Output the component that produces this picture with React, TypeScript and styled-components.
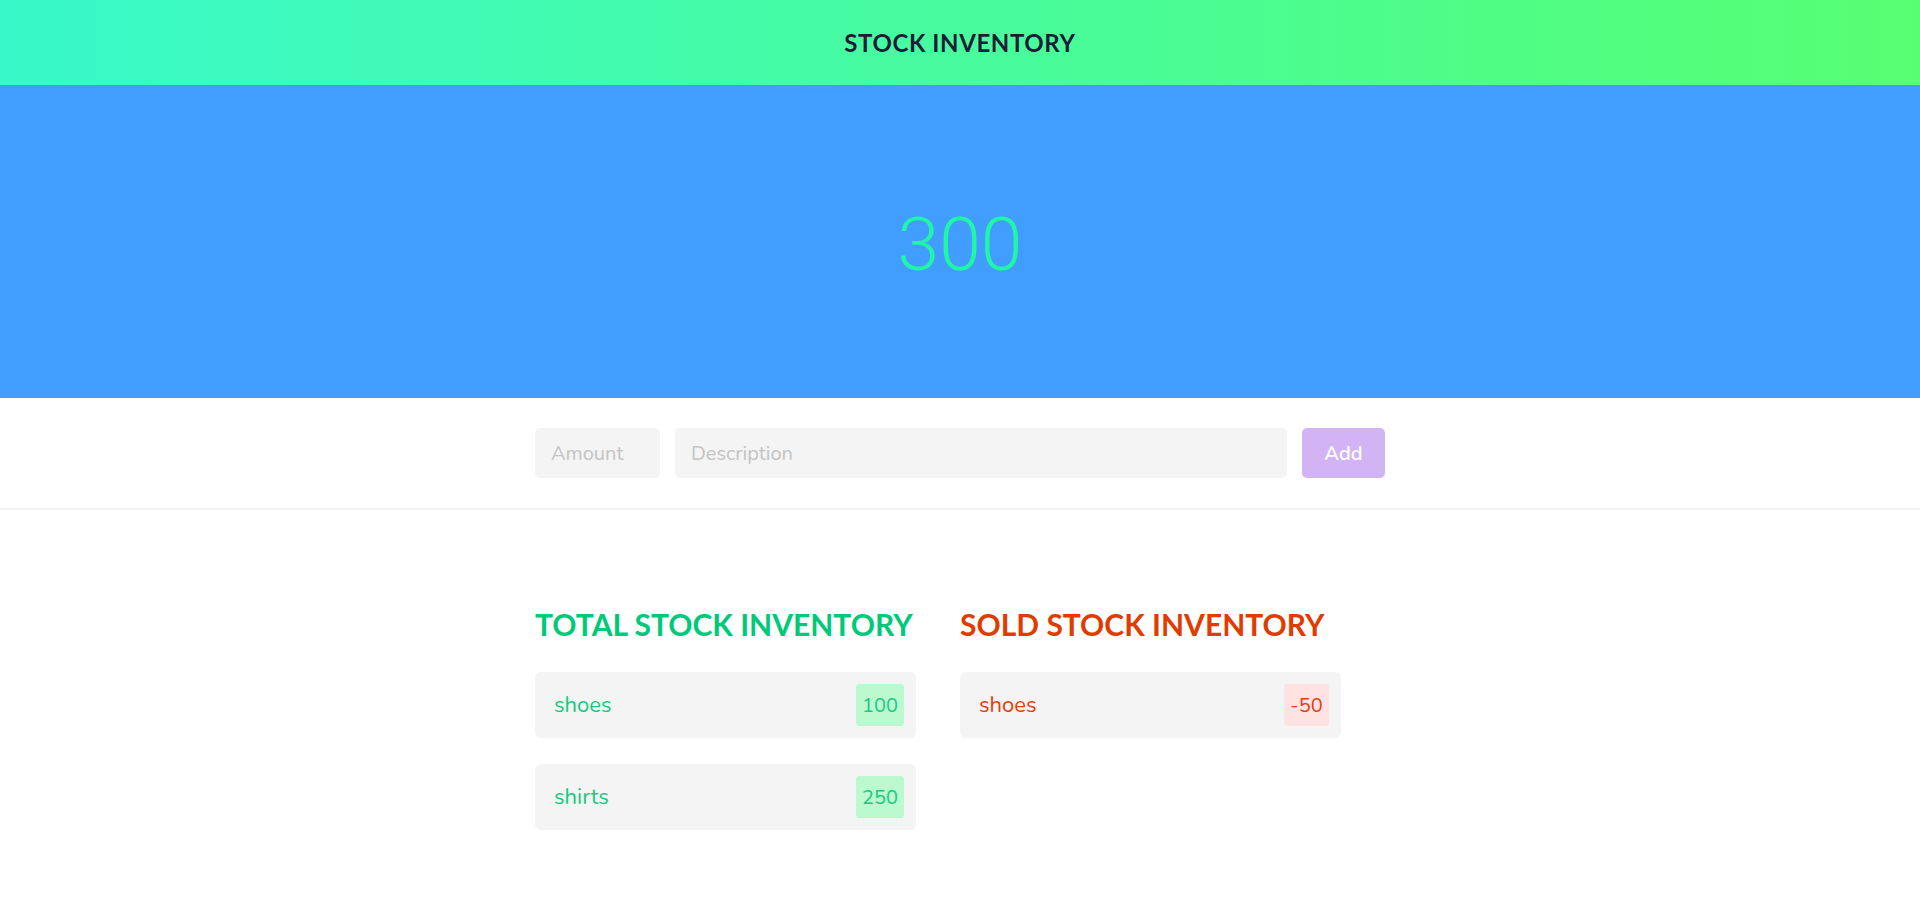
import styled, { createGlobalStyle } from 'styled-components';

const GlobalStyle = createGlobalStyle`
  * {
    box-sizing: border-box;
  }
  body {
    margin: 0;
    background: #ffffff;
    font-family: 'Nunito', 'Lato', 'Noto Sans', sans-serif;
  }
`;

type Tone = 'income' | 'expense';

const tones = {
  income: { text: '#17c97f', badge: '#bbf9cf', heading: '#00c97a' },
  expense: { text: '#e03f0c', badge: '#ffe3e3', heading: '#e03c00' },
};

const totalItems = [
  { id: 1, label: 'shoes', amount: '100' },
  { id: 2, label: 'shirts', amount: '250' },
];

const soldItems = [{ id: 3, label: 'shoes', amount: '-50' }];

const App = () => {
  return (
    <>
      <GlobalStyle />
      <Header>
        <HeaderTitle>STOCK INVENTORY</HeaderTitle>
      </Header>

      <Balance>
        <BalanceValue>300</BalanceValue>
      </Balance>

      <FormSection>
        <Form onSubmit={(e) => e.preventDefault()}>
          <AmountInput type='text' placeholder='Amount' />
          <DescInput type='text' placeholder='Description' />
          <AddButton type='submit'>Add</AddButton>
        </Form>
      </FormSection>

      <Lists>
        <Column>
          <ListTitle $tone='income'>TOTAL STOCK INVENTORY</ListTitle>
          <ItemList>
            {totalItems.map((item) => (
              <Item key={item.id} $tone='income'>
                <span>{item.label}</span>
                <Badge $tone='income'>{item.amount}</Badge>
              </Item>
            ))}
          </ItemList>
        </Column>
        <Column>
          <ListTitle $tone='expense'>SOLD STOCK INVENTORY</ListTitle>
          <ItemList>
            {soldItems.map((item) => (
              <Item key={item.id} $tone='expense'>
                <span>{item.label}</span>
                <Badge $tone='expense'>{item.amount}</Badge>
              </Item>
            ))}
          </ItemList>
        </Column>
      </Lists>
    </>
  );
};

const Header = styled.header`
  height: 85px;
  display: flex;
  align-items: center;
  justify-content: center;
  background: linear-gradient(to right, #38f8c9, #56ff72);
`;

const HeaderTitle = styled.h1`
  margin: 0;
  font-family: 'Lato', sans-serif;
  font-weight: 700;
  font-size: 24px;
  letter-spacing: 0.6px;
  color: #1b1c38;
`;

const Balance = styled.section`
  height: 313px;
  display: flex;
  align-items: center;
  justify-content: center;
  background: #419dff;
`;

const BalanceValue = styled.div`
  margin-top: 4px;
  font-family: 'Roboto', sans-serif;
  font-weight: 300;
  font-size: 75px;
  color: #1ff6a6;
`;

const FormSection = styled.section`
  padding: 30px 0;
  border-bottom: 2px solid #f3f3f3;
`;

const Form = styled.form`
  width: 850px;
  margin: 0 auto;
  display: flex;
  gap: 15px;
`;

const Field = styled.input`
  height: 50px;
  border: none;
  outline: none;
  border-radius: 5px;
  background: #f4f4f4;
  padding: 0 16px;
  font-family: 'Nunito', 'Lato', sans-serif;
  font-size: 20px;
  color: #444;

  &::placeholder {
    color: #c3c3c3;
  }
`;

const AmountInput = styled(Field)`
  width: 125px;
`;

const DescInput = styled(Field)`
  flex: 1;
`;

const AddButton = styled.button`
  width: 83px;
  height: 50px;
  border: none;
  border-radius: 5px;
  background: #d2b4f5;
  color: #ffffff;
  font-family: 'Nunito', 'Lato', sans-serif;
  font-weight: 600;
  font-size: 20px;
  cursor: pointer;
`;

const Lists = styled.main`
  width: 850px;
  margin: 0 auto;
  padding-top: 96px;
  display: flex;
`;

const Column = styled.div`
  width: 50%;
`;

const ListTitle = styled.h2<{ $tone: Tone }>`
  margin: 0 0 30px;
  font-family: 'Lato', sans-serif;
  font-weight: 700;
  font-size: 30px;
  line-height: 36px;
  color: ${({ $tone }) => tones[$tone].heading};
`;

const ItemList = styled.ul`
  list-style: none;
  margin: 0;
  padding: 0;
  display: flex;
  flex-direction: column;
  gap: 26px;
`;

const Item = styled.li<{ $tone: Tone }>`
  width: 381px;
  height: 66px;
  display: flex;
  align-items: center;
  justify-content: space-between;
  padding: 0 12px 0 19px;
  border-radius: 6px;
  background: #f4f4f4;
  font-size: 22px;
  color: ${({ $tone }) => tones[$tone].text};
`;

const Badge = styled.span<{ $tone: Tone }>`
  height: 42px;
  min-width: 45px;
  padding: 0 6px;
  display: flex;
  align-items: center;
  justify-content: center;
  border-radius: 3px;
  font-size: 20px;
  background: ${({ $tone }) => tones[$tone].badge};
  color: ${({ $tone }) => tones[$tone].text};
`;

export default App;
